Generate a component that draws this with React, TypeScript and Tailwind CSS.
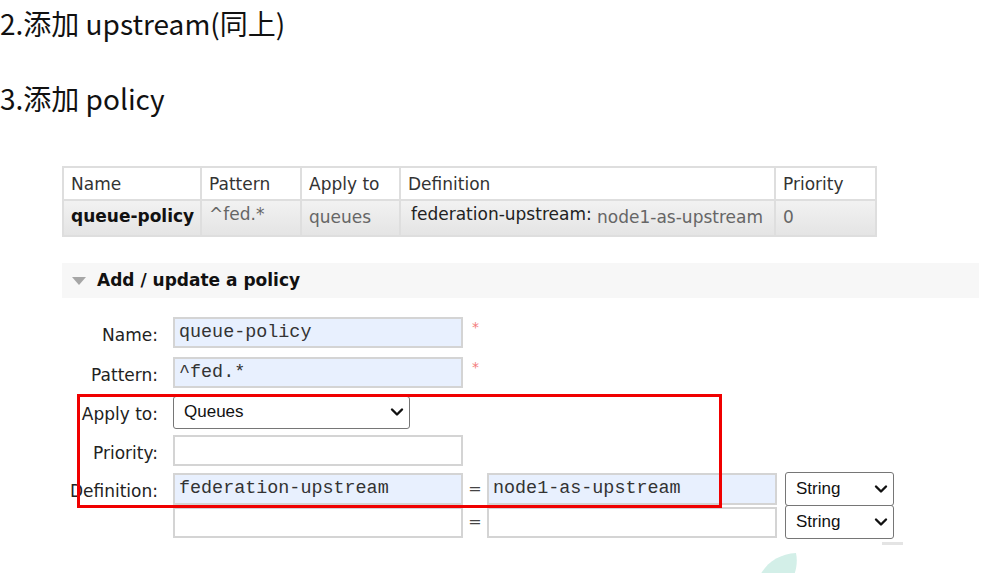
import React from 'react';

const verdana = { fontFamily: '"DejaVu Sans", Verdana, sans-serif' };

const Chevron = () => (
  <svg width="14" height="10" viewBox="0 0 14 10" className="shrink-0">
    <path d="M2 2.5 L7 7.5 L12 2.5" fill="none" stroke="#111" strokeWidth="2.4" strokeLinecap="round" strokeLinejoin="round" />
  </svg>
);

const Select: React.FC<{ label: string; className: string }> = ({ label, className }) => (
  <div
    className={`flex items-center justify-between border border-[#767676] rounded-[3px] bg-white text-[17px] text-[#111] pl-[10px] pr-[5px] ${className}`}
    style={{ fontFamily: '"Liberation Sans", Arial, sans-serif' }}
  >
    <span>{label}</span>
    <Chevron />
  </div>
);

const Field: React.FC<{ value?: string; filled?: boolean; className?: string }> = ({ value = '', filled, className = '' }) => (
  <div
    className={`flex items-center border-2 border-[#d4d4d4] px-[4px] text-[18.4px] text-[#333] ${filled ? 'bg-[#e8f0fe]' : 'bg-white'} ${className}`}
    style={{ fontFamily: '"Liberation Mono", "Courier New", monospace' }}
  >
    {value}
  </div>
);

const Label: React.FC<{ text: string }> = ({ text }) => (
  <div className="w-[158px] shrink-0 pt-[6px] text-right text-[17px] text-[#222] whitespace-nowrap" style={verdana}>
    {text}
  </div>
);

const Star = () => <span className="ml-[9px] text-[14px] text-[#f37a7a] -mt-[10px]" style={verdana}>*</span>;

export default function App() {
  return (
    <div className="relative w-[990px] h-[573px] overflow-hidden bg-white">
      <div className="text-[28px] text-[#111] leading-none" style={{ fontFamily: '"Noto Sans CJK SC", "Noto Sans", sans-serif' }}>
        <div className="h-[50px] flex items-center">
          <span className="relative -top-[2px]">2.添加 upstream(同上)</span>
        </div>
        <div className="h-[50px] mt-[25px] flex items-center">
          <span className="relative -top-[2px]">3.添加 policy</span>
        </div>
      </div>

      <table className="ml-[62px] mt-[41px] border-collapse table-fixed w-[813px] text-[17px]" style={verdana}>
        <thead>
          <tr className="h-[33px] text-[#333] text-left">
            <th className="w-[138px] border-2 border-[#dedede] px-[7px] pt-[2px] font-normal">Name</th>
            <th className="w-[100px] border-2 border-[#dedede] px-[7px] pt-[2px] font-normal">Pattern</th>
            <th className="w-[99px] border-2 border-[#dedede] px-[7px] pt-[2px] font-normal">Apply to</th>
            <th className="w-[375px] border-2 border-[#dedede] px-[7px] pt-[2px] font-normal">Definition</th>
            <th className="w-[101px] border-2 border-[#dedede] px-[7px] pt-[2px] font-normal">Priority</th>
          </tr>
        </thead>
        <tbody>
          <tr className="h-[36px] align-top bg-gradient-to-b from-[#f2f2f2] to-[#e4e4e4] text-[#666]">
            <td className="border-2 border-[#dedede] px-[7px] pt-[3px] font-bold text-[#111] whitespace-nowrap">queue-policy</td>
            <td className="border-2 border-[#dedede] px-[7px] pt-[1px]">^fed.*</td>
            <td className="border-2 border-[#dedede] px-[7px] pt-[4px]">queues</td>
            <td className="border-2 border-[#dedede] px-[10px] pt-[1px] whitespace-nowrap">
              <span className="text-[#222]">federation-upstream:</span>{' '}
              <span className="relative top-[3px]">node1-as-upstream</span>
            </td>
            <td className="border-2 border-[#dedede] px-[7px] pt-[4px]">0</td>
          </tr>
        </tbody>
      </table>

      <div className="ml-[62px] mt-[26px] w-[917px] h-[35px] bg-[#f7f7f7] flex items-center pl-[10px]" style={verdana}>
        <svg width="14" height="8" viewBox="0 0 14 8">
          <path d="M0 0 H14 L7 8 Z" fill="#a6a6a6" />
        </svg>
        <span className="ml-[11px] text-[17px] font-bold text-[#111]">Add / update a policy</span>
      </div>

      <div className="relative mt-[19px]">
        <div className="flex items-center h-[31px]">
          <Label text="Name:" />
          <Field value="queue-policy" filled className="ml-[15px] w-[290px] h-[31px]" />
          <Star />
        </div>
        <div className="flex items-center h-[31px] mt-[9px]">
          <Label text="Pattern:" />
          <Field value="^fed.*" filled className="ml-[15px] w-[290px] h-[31px]" />
          <Star />
        </div>
        <div className="flex items-center h-[32px] mt-[8px]">
          <Label text="Apply to:" />
          <Select label="Queues" className="ml-[15px] w-[237px] h-[33px]" />
        </div>
        <div className="flex items-center h-[31px] mt-[7px]">
          <Label text="Priority:" />
          <Field className="ml-[15px] w-[290px] h-[31px]" />
        </div>
        <div className="flex items-center h-[32px] mt-[7px]">
          <Label text="Definition:" />
          <Field value="federation-upstream" filled className="ml-[15px] w-[290px] h-[32px]" />
          <span className="w-[24px] text-center text-[16px] text-[#444]" style={verdana}>=</span>
          <Field value="node1-as-upstream" filled className="w-[290px] h-[32px]" />
          <Select label="String" className="ml-[8px] w-[109px] h-[34px]" />
        </div>
        <div className="flex items-center h-[32px] mt-[1px]">
          <div className="w-[158px] shrink-0" />
          <Field className="ml-[15px] w-[290px] h-[31px]" />
          <span className="w-[24px] text-center text-[16px] text-[#444]" style={verdana}>=</span>
          <Field className="w-[290px] h-[31px]" />
          <Select label="String" className="ml-[8px] w-[109px] h-[34px]" />
        </div>
        <div className="ml-[882px] mt-[4px] w-[21px] h-[3px] bg-[#e4e4e4]" />

        {/* red highlight frame drawn over the form */}
        <div className="absolute left-[77px] top-[77px] w-[645px] h-[114px] border-[3px] border-[#f00000]" />
      </div>

      <svg className="absolute left-[752px] top-[550px]" width="48" height="30" viewBox="0 0 48 30">
        <path d="M6 30 C12 14 26 4 44 3 C46 12 44 22 40 30 Z" fill="#d3efe8" />
      </svg>
    </div>
  );
}
